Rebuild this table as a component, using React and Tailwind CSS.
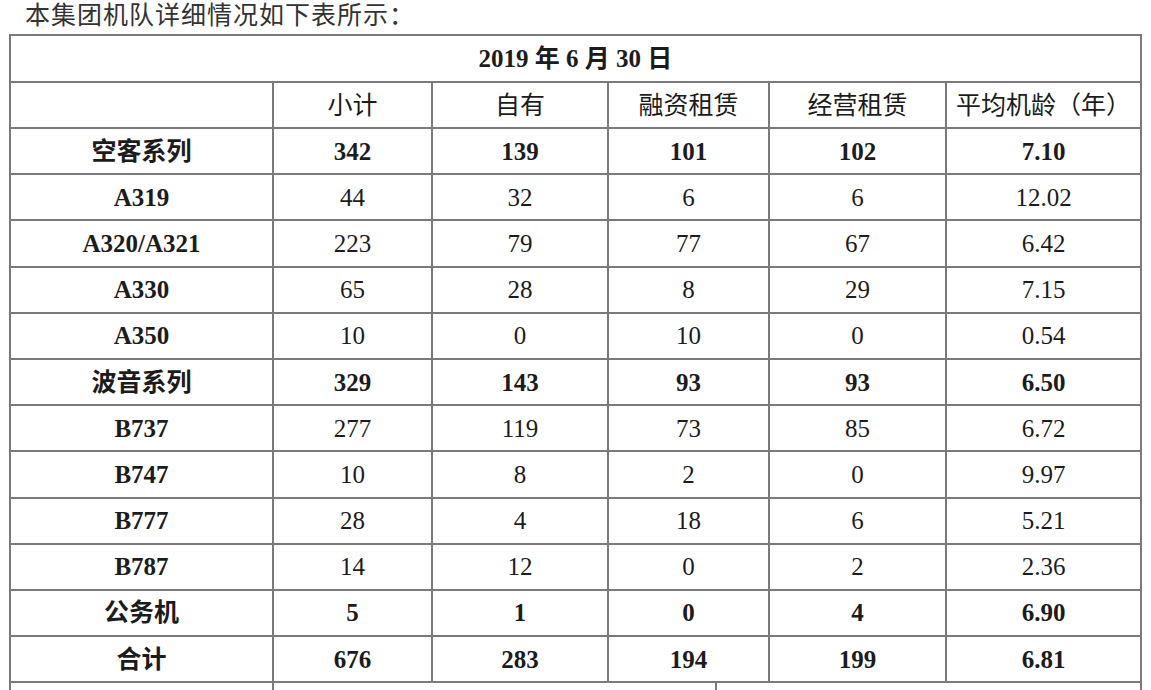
const rows = [
  { label: "空客系列", values: ["342", "139", "101", "102", "7.10"], strong: true },
  { label: "A319", values: ["44", "32", "6", "6", "12.02"] },
  { label: "A320/A321", values: ["223", "79", "77", "67", "6.42"] },
  { label: "A330", values: ["65", "28", "8", "29", "7.15"] },
  { label: "A350", values: ["10", "0", "10", "0", "0.54"] },
  { label: "波音系列", values: ["329", "143", "93", "93", "6.50"], strong: true },
  { label: "B737", values: ["277", "119", "73", "85", "6.72"] },
  { label: "B747", values: ["10", "8", "2", "0", "9.97"] },
  { label: "B777", values: ["28", "4", "18", "6", "5.21"] },
  { label: "B787", values: ["14", "12", "0", "2", "2.36"] },
  { label: "公务机", values: ["5", "1", "0", "4", "6.90"], strong: true },
  { label: "合计", values: ["676", "283", "194", "199", "6.81"], strong: true },
];

const headers = ["小计", "自有", "融资租赁", "经营租赁", "平均机龄（年）"];

const font = "font-['Liberation_Serif','Noto_Sans_CJK_SC',serif]";

function Cell({ children, bold }) {
  return (
    <div
      className={`bg-white h-[44.2px] flex items-center justify-center text-[25px] leading-none text-[#1c1c1c] ${
        bold ? "font-bold" : "font-normal"
      }`}
    >
      {children}
    </div>
  );
}

export default function App() {
  return (
    <div className={`w-[1151px] h-[690px] overflow-hidden bg-white ${font}`}>
      {/* intro line */}
      <div className="h-[34px] pl-[25px] pt-[1px] text-[25px] leading-[30px] tracking-[1px] text-[#333]">
        本集团机队详细情况如下表所示：
      </div>

      <div className="ml-[9px] w-[1133px]">
        <div className="grid grid-cols-[261px_157px_174px_159px_175px_193px] gap-[2px] p-[2px] bg-[#7a7a7a]">
          {/* title row */}
          <div className="col-span-6 bg-white h-[45px] flex items-center justify-center text-[25px] leading-none font-bold text-[#1c1c1c]">
            2019 年 6 月 30 日
          </div>

          {/* header row */}
          <div className="bg-white h-[44px]" />
          {headers.map((h) => (
            <div
              key={h}
              className="bg-white h-[44px] flex items-center justify-center text-[25px] leading-none text-[#1c1c1c]"
            >
              {h}
            </div>
          ))}

          {/* data rows */}
          {rows.map((r) => (
            <div key={r.label} className="contents">
              <Cell bold>{r.label}</Cell>
              {r.values.map((v, i) => (
                <Cell key={i} bold={r.strong}>
                  {v}
                </Cell>
              ))}
            </div>
          ))}
        </div>

        {/* next row, cut off by the page edge */}
        <div className="grid grid-cols-[261px_441px_423px] gap-x-[2px] px-[2px] bg-[#7a7a7a]">
          <div className="bg-white h-[30px]" />
          <div className="bg-white h-[30px]" />
          <div className="bg-white h-[30px]" />
        </div>
      </div>
    </div>
  );
}
